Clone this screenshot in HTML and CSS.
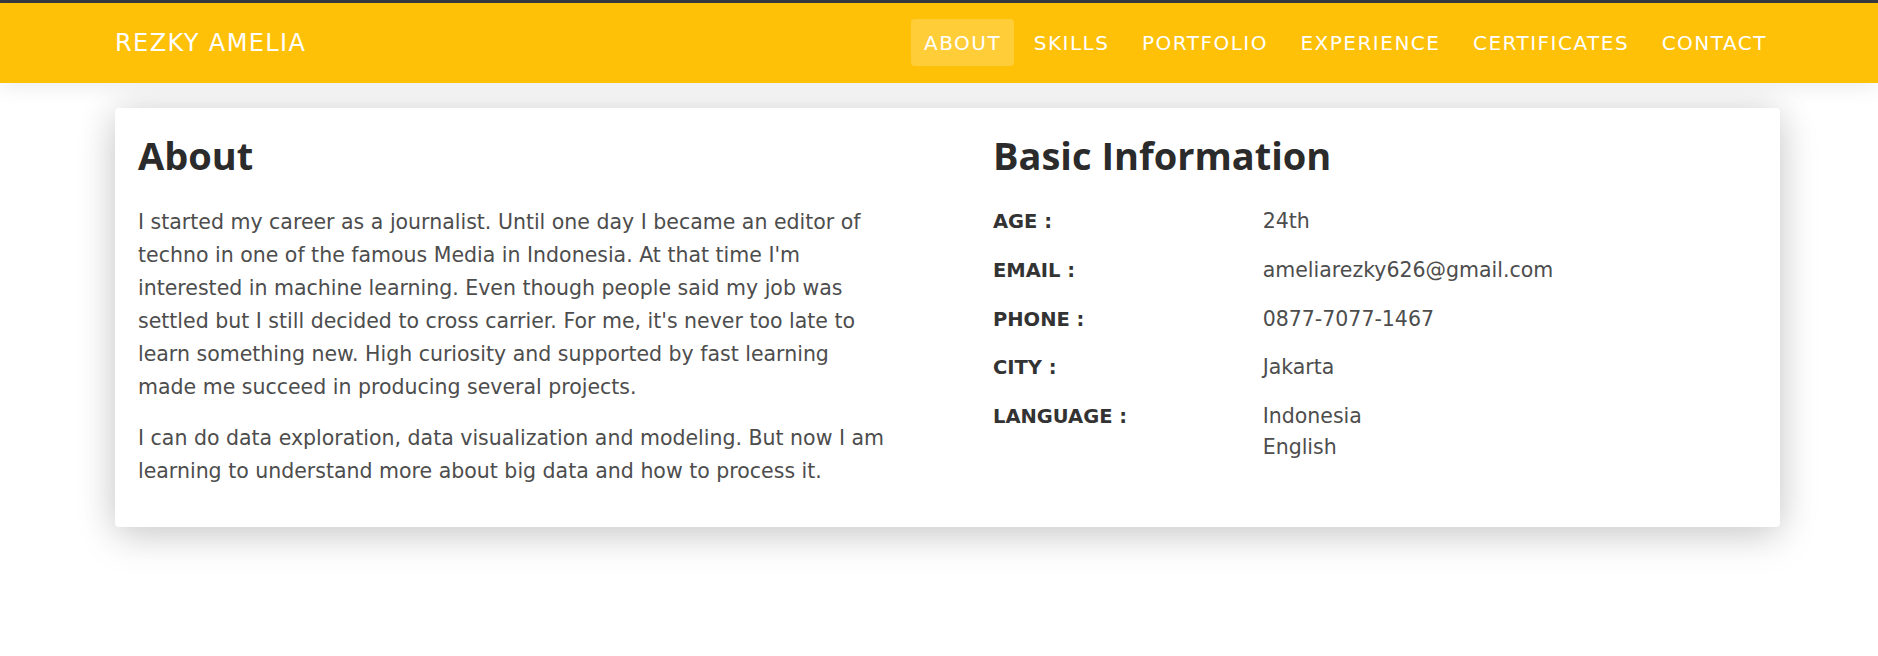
FILE: index.html
```html
<!DOCTYPE html>
<html lang="en">
<head>
<meta charset="utf-8">
<title>Rezky Amelia</title>
<link rel="stylesheet" href="styles.css">
</head>
<body>
<div class="topbar"></div>
<header class="navbar">
  <div class="container nav-inner">
    <a class="brand" href="#">REZKY AMELIA</a>
    <nav class="menu">
      <a class="menu-link active" href="#">ABOUT</a>
      <a class="menu-link" href="#">SKILLS</a>
      <a class="menu-link" href="#">PORTFOLIO</a>
      <a class="menu-link" href="#">EXPERIENCE</a>
      <a class="menu-link" href="#">CERTIFICATES</a>
      <a class="menu-link" href="#">CONTACT</a>
    </nav>
  </div>
</header>
<main class="container">
  <section class="card">
    <div class="col about">
      <h2 class="title">About</h2>
      <p>I started my career as a journalist. Until one day I became an editor of<br>techno in one of the famous Media in Indonesia. At that time I'm<br>interested in machine learning. Even though people said my job was<br>settled but I still decided to cross carrier. For me, it's never too late to<br>learn something new. High curiosity and supported by fast learning<br>made me succeed in producing several projects.</p>
      <p>I can do data exploration, data visualization and modeling. But now I am<br>learning to understand more about big data and how to process it.</p>
    </div>
    <div class="col info">
      <h2 class="title">Basic Information</h2>
      <div class="info-row"><span class="label">AGE :</span><span class="value">24th</span></div>
      <div class="info-row"><span class="label">EMAIL :</span><span class="value">ameliarezky626@gmail.com</span></div>
      <div class="info-row"><span class="label">PHONE :</span><span class="value">0877-7077-1467</span></div>
      <div class="info-row"><span class="label">CITY :</span><span class="value">Jakarta</span></div>
      <div class="info-row"><span class="label">LANGUAGE :</span><span class="value">Indonesia<br>English</span></div>
    </div>
  </section>
</main>
</body>
</html>
```

FILE: styles.css
```css
* { box-sizing: border-box; }

html, body {
  margin: 0;
  padding: 0;
  background: #ffffff;
}

body {
  font-family: "DejaVu Sans", "Open Sans", sans-serif;
  color: #4d4d4d;
  min-height: 100vh;
}

.container {
  width: 1665px;
  margin-left: 115px;
  margin-right: 98px;
}

.topbar {
  height: 3px;
  background: #343a40;
}

.navbar {
  position: relative;
  z-index: 2;
  height: 80px;
  background: #ffc107;
  box-shadow: 0 4px 20px rgba(0, 0, 0, 0.08);
}

.nav-inner {
  height: 100%;
  display: flex;
  align-items: center;
  justify-content: space-between;
}

.brand {
  font-size: 24px;
  line-height: 36px;
  letter-spacing: 1.4px;
  color: #ffffff;
  text-decoration: none;
}

.menu {
  display: flex;
  align-items: center;
  gap: 6.5px;
  margin-top: -1px;
}

.menu-link {
  display: block;
  padding: 8.5px 13px;
  font-size: 20px;
  line-height: 30px;
  letter-spacing: 1.5px;
  color: #ffffff;
  text-decoration: none;
  border-radius: 4px;
}

.menu-link.active {
  background: rgba(255, 255, 255, 0.2);
}

main {
  padding-bottom: 60px;
}

.card {
  margin-top: 25px;
  display: grid;
  grid-template-columns: 1fr 1fr;
  column-gap: 91px;
  padding: 24px 23px 21px;
  background: #ffffff;
  border-radius: 4px;
  box-shadow: 0 10px 40px rgba(0, 0, 0, 0.15), 0 0 36px rgba(0, 0, 0, 0.1);
}

.title {
  margin: 0 0 27px;
  font-family: "Open Sans", "DejaVu Sans", sans-serif;
  font-weight: 700;
  font-size: 38px;
  line-height: 47px;
  color: #2b2b2b;
}

.about p {
  margin: 0 0 18px;
  font-size: 20.5px;
  line-height: 33px;
  white-space: nowrap;
  color: #4d4d4d;
}

.info-row {
  display: grid;
  grid-template-columns: 269.7px 1fr;
  line-height: 31px;
  margin-bottom: 17.8px;
}

.label {
  font-weight: 700;
  font-size: 19.5px;
  color: #333333;
}

.value {
  font-size: 20.5px;
  color: #4d4d4d;
}
```
